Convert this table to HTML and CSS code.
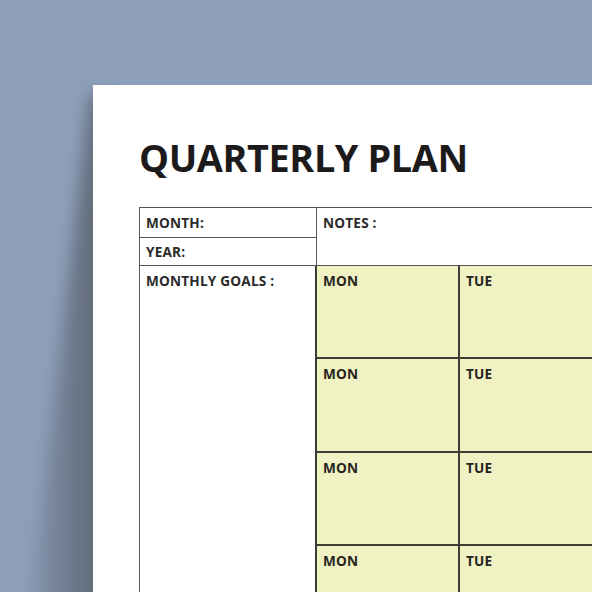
FILE: index.html
```html
<!DOCTYPE html>
<html>
<head>
<meta charset="utf-8">
<link rel="stylesheet" href="styles.css">
</head>
<body>
<div class="scene">
  <div class="shadow"><div class="shadow-shape"></div></div>
  <div class="paper">
    <h1 class="title">QUARTERLY PLAN</h1>
    <div class="planner">
      <div class="cell month">MONTH:</div>
      <div class="cell year">YEAR:</div>
      <div class="cell notes">NOTES :</div>
      <div class="cell goals">MONTHLY GOALS :</div>
      <div class="cell day">MON</div>
      <div class="cell day">TUE</div>
      <div class="cell day">MON</div>
      <div class="cell day">TUE</div>
      <div class="cell day">MON</div>
      <div class="cell day">TUE</div>
      <div class="cell day">MON</div>
      <div class="cell day">TUE</div>
    </div>
  </div>
</div>
</body>
</html>
```
FILE: styles.css
```css
html, body {
  margin: 0;
  padding: 0;
  width: 592px;
  height: 592px;
  overflow: hidden;
  background: #8d9fba;
}

.scene {
  position: relative;
  width: 592px;
  height: 592px;
  overflow: hidden;
  padding: 85px 0 0 93px;
  box-sizing: border-box;
  font-family: "Open Sans", "Noto Sans", sans-serif;
}

.shadow {
  position: absolute;
  left: 0;
  top: 60px;
  width: 110px;
  height: 560px;
  filter: blur(8px);
}

.shadow-shape {
  width: 110px;
  height: 560px;
  clip-path: polygon(90px 34px, 110px 34px, 110px 560px, 28px 560px);
  background: linear-gradient(90deg, rgba(100,112,130,0) 15%, rgba(98,108,124,0.5) 50%, rgba(90,98,110,0.85) 85%);
}

.paper {
  position: relative;
  background: #ffffff;
  width: 560px;
  height: 560px;
  padding: 53px 0 0 46px;
  box-sizing: border-box;
}

.title {
  margin: 0 0 30px 0;
  font-size: 37.8px;
  line-height: 39px;
  font-weight: 700;
  letter-spacing: -0.4px;
  color: #1d1a1b;
}

.planner {
  display: grid;
  grid-template-columns: 177px 143px 200px;
  grid-template-rows: 30px 28px repeat(4, 93.4px);
  border-top: 1.5px solid #555555;
  border-left: 1.5px solid #555555;
  width: max-content;
}

.cell {
  box-sizing: border-box;
  border-right: 1.5px solid #555555;
  border-bottom: 1.5px solid #555555;
  padding: 7px 6px 0 6px;
  font-size: 13.6px;
  line-height: 16px;
  font-weight: 700;
  color: #2a2a2a;
  letter-spacing: 0.2px;
}

.month { grid-column: 1; grid-row: 1; }
.year { grid-column: 1; grid-row: 2; padding-top: 6px; }
.notes { grid-column: 2 / span 2; grid-row: 1 / span 2; }
.goals {
  grid-column: 1;
  grid-row: 3 / span 4;
  border-right: 2px solid #3c3c36;
  padding-top: 7px;
}

.day {
  background: #f1f2c4;
  border-right: 2px solid #3c3c34;
  border-bottom: 2px solid #3c3c34;
  padding: 7px 6px 0 6px;
  color: #26241c;
}
```
